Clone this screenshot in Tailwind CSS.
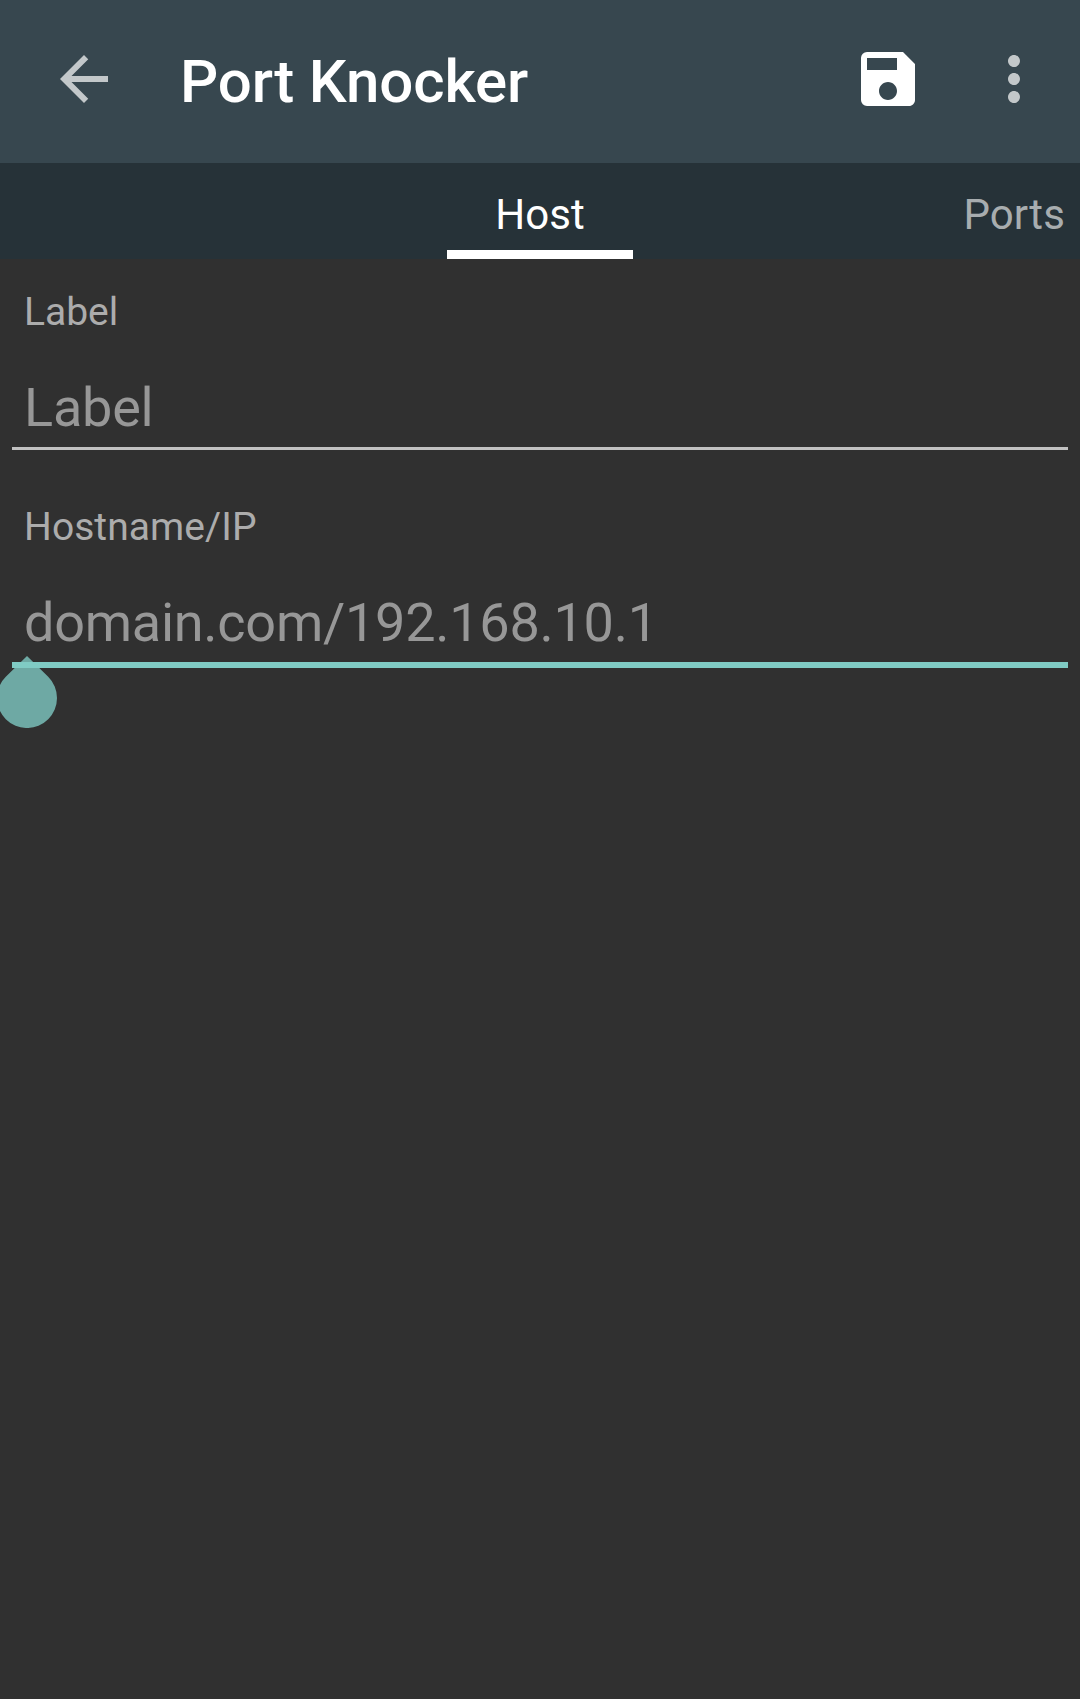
<!DOCTYPE html>
<html lang="en">
<head>
<meta charset="utf-8">
<title>Port Knocker</title>
<script src="https://cdn.jsdelivr.net/npm/@tailwindcss/browser@4"></script>
</head>
<body class="bg-[#303030] font-['Roboto',sans-serif] h-[1699px] overflow-hidden">
<header class="h-[163px] bg-[#37474f] flex items-center pb-[5px] pl-[48px] pr-[30px]">
<svg class="size-[72px] shrink-0" viewBox="0 0 24 24" fill="#c3c8ca"><path d="M20 11H7.83l5.59-5.59L12 4l-8 8 8 8 1.41-1.41L7.83 13H20v-2z"/></svg>
<h1 class="ml-[60px] mt-[5px] text-[60px] leading-[70px] font-medium tracking-[-0.15px] text-white whitespace-nowrap">Port Knocker</h1>
<svg class="ml-auto size-[72px] shrink-0" viewBox="0 0 24 24" fill="#fff"><path d="M17 3H5a2 2 0 0 0-2 2v14a2 2 0 0 0 2 2h14c1.1 0 2-.9 2-2V7l-4-4zm-5 16c-1.66 0-3-1.34-3-3s1.34-3 3-3 3 1.34 3 3-1.34 3-3 3zm3-10H5V5h10v4z"/></svg>
<svg class="ml-[54px] size-[72px] shrink-0" viewBox="0 0 24 24" fill="#c3c8ca"><path d="M12 8c1.1 0 2-.9 2-2s-.9-2-2-2-2 .9-2 2 .9 2 2 2zm0 2c-1.1 0-2 .9-2 2s.9 2 2 2 2-.9 2-2-.9-2-2-2zm0 6c-1.1 0-2 .9-2 2s.9 2 2 2 2-.9 2-2-.9-2-2-2z"/></svg>
</header>
<nav class="h-[96px] bg-[#263238] grid grid-cols-[1fr_186px_1fr] text-[42px] leading-[50px]">
<div></div>
<div class="border-b-[9px] border-white text-white text-center pt-[27px]">Host</div>
<div class="text-[#a8adaf] text-right pt-[27px] pr-[15px] tracking-[0.15px]">Ports</div>
</nav>
<main class="px-[12px] isolate">
<label class="block h-[107px] pt-[29px] px-[12px] text-[39px] leading-[48px] text-[#acacac]">Label</label>
<div class="h-[84px] pt-[10px] px-[12px] text-[54px] leading-[64px] tracking-[-0.2px] text-[#979797] border-b-[3px] border-[#c1c1c1]">Label</div>
<label class="block h-[131px] pt-[53px] px-[12px] text-[39px] leading-[48px] tracking-[0.06px] text-[#acacac]">Hostname/IP</label>
<div class="relative h-[87px] pt-[10px] px-[12px] text-[54px] leading-[64px] tracking-[-0.26px] text-[#979797] border-b-[6px] border-[#80cbc4]">domain.com/192.168.10.1
<!-- cursor handle, tucked behind the underline -->
<svg class="absolute -z-10 left-[-15px] top-[75px] w-[60px] h-[72px]" viewBox="0 0 60 72" fill="#6ea9a4"><path d="M30 0L51.200 20.800A30 30 0 1 1 8.800 20.800Z"/></svg>
</div>
</main>
</body>
</html>
